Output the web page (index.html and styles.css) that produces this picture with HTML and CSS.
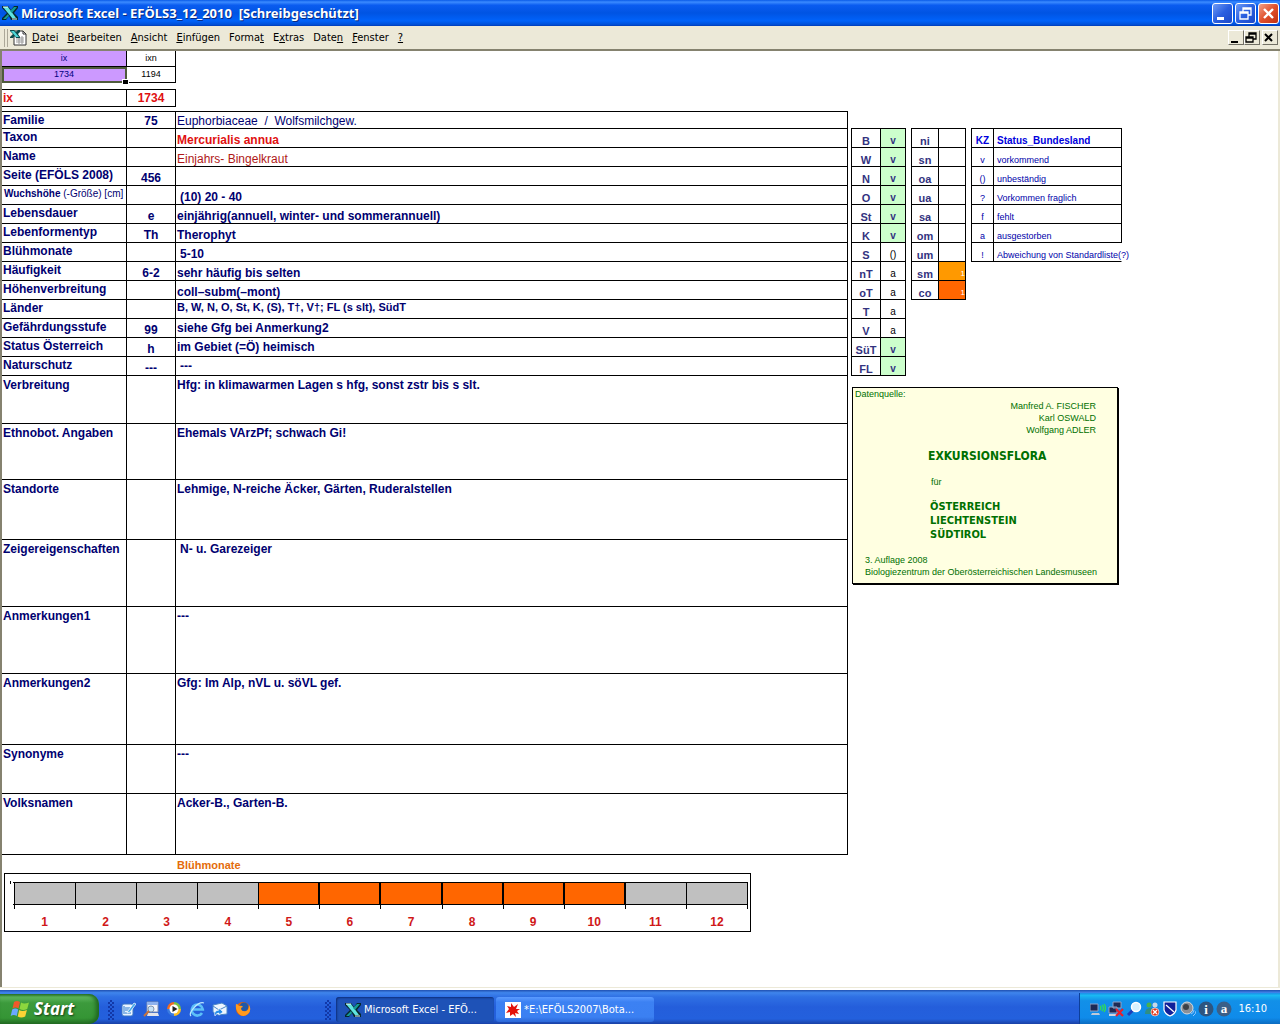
FILE: index.html
```html
<!DOCTYPE html>
<html lang="de">

<head>
    <meta charset="UTF-8">
    <meta name="viewport" content="width=device-width, initial-scale=1.0">
    <title>Microsoft Excel - EFÖLS3_12_2010</title>
    <link rel="stylesheet" href="styles.css">
</head>

<body>
    <svg width="0" height="0" class="defs">
        <symbol id="excel" viewBox="0 0 16 16">
            <path d="M0 1h6l3 4 3-4h4v2l-4 5 4 4v3H9l-2-4-3 4H0v-2l5-5-5-5z" fill="#06282c" />
            <path d="M1 2h5l8 11h-4z" fill="#5fe3e0" />
            <path d="M12 2h3l-5 6-2-2zM1 14l5-5 1 2-3 3z" fill="#159a96" />
            <path d="M1 2h5M10 14h5" stroke="#e6ffff" stroke-width="1" fill="none" />
        </symbol>
    </svg>

    <header class="titlebar">
        <svg class="icon"><use href="#excel" /></svg>
        <h1>Microsoft Excel - EFÖLS3_12_2010&nbsp; [Schreibgeschützt]</h1>
        <div class="win-buttons">
            <button aria-label="Minimieren"><svg viewBox="0 0 19 19"><path d="M4 13h7v3H4z" fill="#fff" /></svg></button>
            <button aria-label="Wiederherstellen"><svg viewBox="0 0 19 19"><path d="M7 8V4h8v7h-3M7 5h8M4 8h8v7H4zM4 9h8" fill="none" stroke="#fff" stroke-width="1.3" /></svg></button>
            <button class="red" aria-label="Schließen"><svg viewBox="0 0 19 19"><path d="M5 5l9 9M14 5l-9 9" stroke="#fff" stroke-width="2.4" /></svg></button>
        </div>
    </header>

    <nav class="menubar">
        <span class="grip"></span>
        <svg class="doc" viewBox="0 0 17 17">
            <path d="M4 2h9l3 3v11H4z" fill="#fff" stroke="#333" />
            <path d="M13 2v3h3" fill="none" stroke="#333" />
            <path d="M6 9h8M6 11h8M6 13h8M9 7v8M12 7v8" stroke="#9a9a9a" />
            <path d="M0 1h4l2 2 2-2h2v2L8 5l2 3v1H6L5 7 3 9H0V8l3-3-3-3z" fill="#0b4a4a" />
            <path d="M1 2h3l5 6H6z" fill="#4fd8d8" />
        </svg>
        <button><u>D</u>atei</button>
        <button><u>B</u>earbeiten</button>
        <button><u>A</u>nsicht</button>
        <button><u>E</u>infügen</button>
        <button>Forma<u>t</u></button>
        <button>E<u>x</u>tras</button>
        <button>Date<u>n</u></button>
        <button><u>F</u>enster</button>
        <button><u>?</u></button>
        <div class="doc-buttons">
            <button aria-label="Mappe minimieren"><svg viewBox="0 0 12 12"><path d="M2 9h7v2H2z" /></svg></button>
            <button aria-label="Mappe wiederherstellen"><svg viewBox="0 0 12 12"><path d="M4 5V1h7v6H8M4 2h7M1 5h7v5H1zM1 6h7" fill="none" stroke="#000" stroke-width="1.3" /></svg></button>
            <button class="last" aria-label="Mappe schließen"><svg viewBox="0 0 12 12"><path d="M2 2l7 7M9 2L2 9" stroke="#000" stroke-width="2" /></svg></button>
        </div>
    </nav>

    <main class="sheet">
        <section class="record">
            <table class="grid index">
                <tr><td class="lila">ix</td><td>ixn</td></tr>
                <tr><td class="lila selected">1734</td><td>1194</td></tr>
            </table>
            <table class="grid key">
                <tr><th>ix</th><td>1734</td></tr>
            </table>
            <table class="grid data">
                <colgroup><col class="c1"><col class="c2"><col></colgroup>
                <tr class="first"><th>Familie</th><td class="num">75</td><td class="plain">Euphorbiaceae&nbsp; /&nbsp; Wolfsmilchgew.</td></tr>
                <tr><th>Taxon</th><td></td><td class="red">Mercurialis annua</td></tr>
                <tr><th>Name</th><td></td><td class="plain darkred">Einjahrs- Bingelkraut</td></tr>
                <tr><th>Seite (EFÖLS 2008)</th><td class="num">456</td><td></td></tr>
                <tr><th class="small"><b>Wuchshöhe</b> (-Größe) [cm]</th><td></td><td class="indent">(10) 20 - 40</td></tr>
                <tr><th>Lebensdauer</th><td class="num">e</td><td>einjährig(annuell, winter- und sommerannuell)</td></tr>
                <tr><th>Lebenformentyp</th><td class="num">Th</td><td>Therophyt</td></tr>
                <tr><th>Blühmonate</th><td></td><td class="indent">5-10</td></tr>
                <tr><th>Häufigkeit</th><td class="num">6-2</td><td>sehr häufig bis selten</td></tr>
                <tr><th>Höhenverbreitung</th><td></td><td>coll–subm(–mont)</td></tr>
                <tr><th>Länder</th><td></td><td class="lands">B, W, N, O, St, K, (S), T†, V†; FL (s slt), SüdT</td></tr>
                <tr class="mid"><th>Gefährdungsstufe</th><td class="num">99</td><td>siehe Gfg bei Anmerkung2</td></tr>
                <tr class="mid"><th>Status Österreich</th><td class="num">h</td><td>im Gebiet (=Ö) heimisch</td></tr>
                <tr class="mid"><th>Naturschutz</th><td class="num">---</td><td class="indent">---</td></tr>
                <tr class="tall h48"><th>Verbreitung</th><td></td><td>Hfg: in klimawarmen Lagen s hfg, sonst zstr bis s slt.</td></tr>
                <tr class="tall h56"><th>Ethnobot. Angaben</th><td></td><td>Ehemals VArzPf; schwach Gi!</td></tr>
                <tr class="tall h60"><th>Standorte</th><td></td><td>Lehmige, N-reiche Äcker, Gärten, Ruderalstellen</td></tr>
                <tr class="tall h67"><th>Zeigereigenschaften</th><td></td><td class="indent">N- u. Garezeiger</td></tr>
                <tr class="tall h67"><th>Anmerkungen1</th><td></td><td>---</td></tr>
                <tr class="tall h71"><th>Anmerkungen2</th><td></td><td>Gfg: Im Alp, nVL u. söVL gef.</td></tr>
                <tr class="tall h49"><th>Synonyme</th><td></td><td>---</td></tr>
                <tr class="tall h61"><th>Volksnamen</th><td></td><td>Acker-B., Garten-B.</td></tr>
            </table>

            <h2 class="chart-title">Blühmonate</h2>
            <div class="chart">
                <div class="month"><i></i><span>1</span></div>
                <div class="month"><i></i><span>2</span></div>
                <div class="month"><i></i><span>3</span></div>
                <div class="month"><i></i><span>4</span></div>
                <div class="month on"><i></i><span>5</span></div>
                <div class="month on"><i></i><span>6</span></div>
                <div class="month on"><i></i><span>7</span></div>
                <div class="month on"><i></i><span>8</span></div>
                <div class="month on"><i></i><span>9</span></div>
                <div class="month on"><i></i><span>10</span></div>
                <div class="month"><i></i><span>11</span></div>
                <div class="month"><i></i><span>12</span></div>
            </div>
        </section>

        <aside class="side">
            <div class="tables">
                <table class="grid status">
                    <tr><th>B</th><td class="v">v</td></tr>
                    <tr><th>W</th><td class="v">v</td></tr>
                    <tr><th>N</th><td class="v">v</td></tr>
                    <tr><th>O</th><td class="v">v</td></tr>
                    <tr><th>St</th><td class="v">v</td></tr>
                    <tr><th>K</th><td class="v">v</td></tr>
                    <tr><th>S</th><td>()</td></tr>
                    <tr><th>nT</th><td>a</td></tr>
                    <tr><th>oT</th><td>a</td></tr>
                    <tr><th>T</th><td>a</td></tr>
                    <tr><th>V</th><td>a</td></tr>
                    <tr><th>SüT</th><td class="v">v</td></tr>
                    <tr><th>FL</th><td class="v">v</td></tr>
                </table>
                <table class="grid status zones">
                    <tr><th>ni</th><td></td></tr>
                    <tr><th>sn</th><td></td></tr>
                    <tr><th>oa</th><td></td></tr>
                    <tr><th>ua</th><td></td></tr>
                    <tr><th>sa</th><td></td></tr>
                    <tr><th>om</th><td></td></tr>
                    <tr><th>um</th><td></td></tr>
                    <tr><th>sm</th><td class="sm">1</td></tr>
                    <tr><th>co</th><td class="co">1</td></tr>
                </table>
                <table class="grid legend">
                    <tr><th>KZ</th><th>Status_Bundesland</th></tr>
                    <tr><td>v</td><td>vorkommend</td></tr>
                    <tr><td>()</td><td>unbeständig</td></tr>
                    <tr><td>?</td><td>Vorkommen fraglich</td></tr>
                    <tr><td>f</td><td>fehlt</td></tr>
                    <tr><td>a</td><td>ausgestorben</td></tr>
                    <tr><td>!</td><td class="open">Abweichung von Standardliste(?)</td></tr>
                </table>
            </div>

            <div class="note">
                <p>Datenquelle:</p>
                <p class="authors">Manfred A. FISCHER<br>Karl OSWALD<br>Wolfgang ADLER</p>
                <h3>EXKURSIONSFLORA</h3>
                <p class="for">für</p>
                <h4>ÖSTERREICH<br>LIECHTENSTEIN<br>SÜDTIROL</h4>
                <p class="publisher">3. Auflage 2008<br>Biologiezentrum der Oberösterreichischen Landesmuseen</p>
            </div>
        </aside>
    </main>

    <footer class="taskbar">
        <button class="start">
            <svg viewBox="0 0 20 20">
                <path d="M4 3q3-2 6 0L8.500 9.500q-3-2-6 0z" fill="#f0592b" />
                <path d="M11 3.500q3 2 8 0L17.200 10q-4 2-7.700 0z" fill="#8cd63e" />
                <path d="M2.200 10.500q3-2 6 0L6.700 17q-3-2-6 0z" fill="#6ba8ff" />
                <path d="M9.200 11q3 2 7.700 0L15.200 17.500q-4 2-7.500 0z" fill="#fbd335" />
            </svg>
            Start
        </button>
        <span class="dots"></span>
        <div class="quick">
            <button aria-label="Desktop anzeigen"><svg viewBox="0 0 16 16">
                <rect x="2" y="3" width="11" height="12" rx="2" fill="#e9f4ff" stroke="#3b77c4" />
                <path d="M5 7h5M5 9h4M5 12h6M4 5v8" stroke="#2b7bd0" fill="none" />
                <path d="M8 10l6-8 2 1-6 8-3 1z" fill="#3fa7ea" stroke="#fff" stroke-width=".7" />
            </svg></button>
            <button aria-label="Suchen"><svg viewBox="0 0 16 16">
                <path d="M4 1h11v10H4z" fill="#f4f4fa" stroke="#7e8fb0" />
                <path d="M4 1h11v3H4z" fill="#8fb2ee" />
                <path d="M5 12h10l1 3H4z" fill="#e4e4ea" />
                <circle cx="8" cy="8" r="3" fill="#c7e3f8" stroke="#8594ad" />
                <path d="M6 10l-5 5" stroke="#c9743a" stroke-width="2" />
            </svg></button>
            <button aria-label="Media Player"><svg viewBox="0 0 16 16">
                <path d="M8 1a7 7 0 0 1 7 7H8z" fill="#7ac143" />
                <path d="M8 1a7 7 0 0 0-7 7h7z" fill="#ef6b23" />
                <path d="M1 8a7 7 0 0 0 7 7V8z" fill="#3a7be0" />
                <path d="M8 15a7 7 0 0 0 7-7H8z" fill="#fdbf24" />
                <circle cx="8" cy="8" r="4.500" fill="#fff" />
                <path d="M6.500 5l5 3-5 3z" fill="#222" />
            </svg></button>
            <button aria-label="Internet Explorer"><svg viewBox="0 0 16 16">
                <path d="M13 12a5.500 5.500 0 1 1 .8-3.500H4" fill="none" stroke="#5cc0f8" stroke-width="2.600" />
                <path d="M2 15C-1 12 9 0 15 2" fill="none" stroke="#bfe8ff" stroke-width="1.200" />
            </svg></button>
            <button aria-label="Outlook Express"><svg viewBox="0 0 16 16">
                <path d="M1 4l9-2 5 3v8l-9 1-5-3z" fill="#eef6ff" stroke="#4b86c8" />
                <path d="M1 5l6 4 8-4" fill="none" stroke="#4b86c8" />
                <path d="M3 15q-2-5 4-6V7l4 4-4 3v-2q-3 0-4 3z" fill="#268ce8" stroke="#fff" stroke-width=".6" />
            </svg></button>
            <button aria-label="Firefox"><svg viewBox="0 0 16 16">
                <circle cx="8" cy="8" r="7" fill="#e66000" />
                <circle cx="9" cy="6" r="4.500" fill="#1f58a8" />
                <path d="M1 3q2 0 3 2 3-1 4 1-2 0-2 2 1 3 5 2 3-1 3-6 3 5-1 9-5 4-9 0-4-4-3-10z" fill="#ff9a1f" />
            </svg></button>
        </div>
        <span class="dots"></span>
        <button class="task active"><svg class="icon"><use href="#excel" /></svg><span>Microsoft Excel - EFÖ...</span></button>
        <button class="task">
            <svg class="icon" viewBox="0 0 16 16">
                <path d="M0 0h16v16H0z" fill="#fff" />
                <path d="M6 1l3 4 4-3-2 5h4l-3 2 2 3-4-1 1 4-3-3-3 2v-4l-4 1 3-4-2-3 4 1z" fill="#e3120b" />
            </svg>
            <span>*E:\EFÖLS2007\Bota...</span>
        </button>
        <div class="tray">
            <svg viewBox="0 0 16 16"><path d="M0 3h8v7H0z" fill="#1d2a55" stroke="#8fa3c8" /><path d="M2 12h7l1 2H1z" fill="#bfc9d8" /><path d="M10 5q2 2 0 4M12 4q3 3 0 6M14 3q3 4 0 8" fill="none" stroke="#35e04a" stroke-width="1.200" /></svg>
            <svg viewBox="0 0 16 16"><path d="M5 1h8v6H5zM1 6h8v6H1z" fill="#1d2a55" stroke="#8fa3c8" /><path d="M1 14h8" stroke="#cdd5e0" stroke-width="2" /><path d="M8 8l7 7M15 8l-7 7" stroke="#e8202a" stroke-width="2.200" /></svg>
            <svg viewBox="0 0 16 16"><path d="M7 9l-5 5" stroke="#1c3fb8" stroke-width="3" /><circle cx="10" cy="6" r="4.500" fill="#d6f1ff" stroke="#fff" stroke-width="1.500" /></svg>
            <svg viewBox="0 0 16 16"><circle cx="5" cy="4" r="2.500" fill="#49b04e" /><circle cx="11" cy="4" r="2.500" fill="#c8d8e8" /><path d="M1 13q0-6 5-6t5 6z" fill="#2f8e83" /><path d="M8 8q4-2 6 3H8z" fill="#e9eef5" /><circle cx="11" cy="11" r="4" fill="#e2381c" stroke="#fff" stroke-width=".6" /><path d="M9 9l4 4M13 9l-4 4" stroke="#fff" stroke-width="1.300" /></svg>
            <svg viewBox="0 0 16 16"><path d="M2 1h12v8q-1 4-6 6-5-2-6-6z" fill="#10209a" stroke="#fff" stroke-width="1.200" /><path d="M4 4l8 7" stroke="#fff" stroke-width="1.200" /></svg>
            <svg viewBox="0 0 16 16"><circle cx="7" cy="7" r="6" fill="#8b9097" stroke="#d7dade" /><circle cx="6" cy="6" r="3" fill="#3c4148" /><path d="M11 13q3-1 3-4M13 15q3-2 3-5" fill="none" stroke="#8dc4ff" /></svg>
            <svg viewBox="0 0 16 16"><circle cx="8" cy="8" r="7.500" fill="#2d5580" /><text x="8" y="13" class="glyph">i</text></svg>
            <svg viewBox="0 0 16 16"><circle cx="8" cy="8" r="7.500" fill="#3a5f88" /><text x="8" y="12" class="glyph">a</text></svg>
            <time>16:10</time>
        </div>
    </footer>
</body>

</html>
```
FILE: styles.css
```css
* {
    box-sizing: border-box;
}

html,
body {
    margin: 0;
    padding: 0;
    height: 100%;
}

body {
    display: flex;
    flex-direction: column;
    overflow: hidden;
    background: #fff;
    font-family: "Liberation Sans", Arial, sans-serif;
    font-size: 12px;
    color: #000070;
}

h1, h2, h3, h4, p {
    margin: 0;
}

button {
    margin: 0;
    padding: 0;
    border: 0;
    background: none;
    font: inherit;
    color: inherit;
}

.defs {
    position: absolute;
}

.icon {
    width: 16px;
    height: 16px;
    flex: none;
}

/* Titelleiste */
.titlebar {
    display: flex;
    align-items: center;
    gap: 3px;
    height: 26px;
    flex: none;
    padding: 0 1px 0 2px;
    background: linear-gradient(#0a5be8, #3b8bff 8%, #0a5cf0 20%, #0054e3 50%, #0062fa 80%, #0050d8 94%, #003bb8);
    color: #fff;
}

.titlebar h1 {
    flex: 1;
    font: bold 13px/24px "Noto Sans", "Open Sans", sans-serif;
    text-shadow: 1px 1px #0a2a80;
}

.win-buttons {
    display: flex;
    gap: 2px;
}

.win-buttons button {
    width: 21px;
    height: 21px;
    border: 1px solid #fff;
    border-radius: 3px;
    background: linear-gradient(135deg, #6f9bf5, #2a5fe0 50%, #1b48c8);
}

.win-buttons .red {
    background: linear-gradient(135deg, #f0a088, #e0502c 50%, #c03010);
}

.win-buttons svg {
    display: block;
    width: 19px;
    height: 19px;
}

/* Menü */
.menubar {
    display: flex;
    align-items: center;
    gap: 9px;
    height: 25px;
    flex: none;
    padding: 0 2px 0 4px;
    border-bottom: 2px solid #85826f;
    background: #ece9d8;
    color: #000;
    font: 11px/14px "DejaVu Sans Condensed", Tahoma, sans-serif;
}

.grip {
    width: 4px;
    height: 18px;
    margin-right: -7px;
    border: 1px solid #aca899;
    border-width: 0 1px;
}

.doc {
    width: 17px;
    height: 17px;
    margin-right: -4px;
}

.doc-buttons {
    display: flex;
    margin-left: auto;
}

.doc-buttons button {
    width: 16px;
    height: 15px;
    border: 1px solid;
    border-color: #fff #716f64 #716f64 #fff;
}

.doc-buttons .last {
    margin-left: 2px;
}

.doc-buttons svg {
    display: block;
    width: 12px;
    height: 12px;
}

/* Tabellenblatt */
.sheet {
    display: flex;
    align-items: flex-start;
    gap: 3px;
    flex: 1;
    min-height: 0;
    margin-bottom: 2px;
    overflow: hidden;
    border: solid #ece9d8;
    border-width: 0 2px 1px 0;
    box-shadow: inset 2px 0 #85826f;
    padding-left: 2px;
}

.record {
    flex: 0 1 846px;
}

.grid {
    border-collapse: separate;
    border-spacing: 0;
    table-layout: fixed;
}

.grid td,
.grid th {
    padding: 0;
    border: 0 solid #000;
    border-width: 0 1px 1px 0;
    white-space: nowrap;
}

.index {
    width: 174px;
}

.index td {
    height: 16px;
    width: 49px;
    line-height: 15px;
    font-size: 9px;
    text-align: center;
    color: #000;
}

.index .lila {
    width: 125px;
    background: #cc99ff;
    color: #000080;
}

.index .selected {
    position: relative;
    outline: 2px solid #4f5b3c;
    outline-offset: -2px;
}

/* Ausfüllkästchen */
.index .selected::after {
    content: "";
    position: absolute;
    right: -3px;
    bottom: -3px;
    width: 5px;
    height: 4px;
    border: 1px solid #fff;
    background: #000;
}

.key {
    width: 174px;
    margin: 6px 0 4px;
    border-top: 1px solid #000;
    color: #e01010;
}

.key th,
.key td {
    height: 17px;
    line-height: 16px;
    font-weight: bold;
}

.key th {
    width: 125px;
    padding-left: 1px;
    text-align: left;
}

.key td {
    width: 49px;
    font-size: 12px;
    text-align: center;
}

.data {
    width: 100%;
    border-top: 1px solid #000;
}

.c1 {
    width: 125px;
}

.c2 {
    width: 49px;
}

.data th,
.data td {
    height: 19px;
    padding-left: 1px;
    line-height: 16px;
    font-weight: bold;
    text-align: left;
    vertical-align: top;
}

.data td {
    line-height: 14px;
    vertical-align: bottom;
}

.data .first th,
.data .first td {
    height: 17px;
}

.data .num {
    padding-left: 0;
    text-align: center;
}

.data .indent {
    padding-left: 4px;
}

.data .plain {
    font-weight: normal;
}

.data .darkred {
    color: #b01818;
}

.data .red {
    color: #e01010;
}

.data .small {
    padding-left: 2px;
    font-size: 10px;
    font-weight: normal;
}

.data .lands {
    font-size: 11px;
    vertical-align: top;
}

.data .mid td:last-child {
    line-height: 18px;
}

.data .tall th,
.data .tall td {
    line-height: 18px;
    vertical-align: top;
}

.data .h48 td { height: 48px; }
.data .h49 td { height: 49px; }
.data .h56 td { height: 56px; }
.data .h60 td { height: 60px; }
.data .h61 td { height: 61px; }
.data .h67 td { height: 67px; }
.data .h71 td { height: 71px; }

/* Diagramm Blühmonate */
.chart-title {
    padding: 3px 0 0 175px;
    font-size: 11px;
    line-height: 15px;
    color: #e46c0a;
}

/* die drei kleinen Striche links sind die Achsenmarken */
.chart {
    display: flex;
    max-width: 747px;
    margin-left: 2px;
    padding: 8px 3px 0 9px;
    border: 1px solid #000;
    background:
        linear-gradient(#000, #000) 5px 7px / 1px 3px no-repeat,
        linear-gradient(#000, #000) 8px 8px / 2px 1px no-repeat,
        linear-gradient(#000, #000) 8px 30px / 2px 1px no-repeat;
}

.month {
    flex: 1;
    text-align: center;
    font-weight: bold;
    color: #d01818;
}

.month i {
    display: block;
    height: 23px;
    border: solid #000;
    border-width: 1px 0 1px 1px;
    background: #c0c0c0;
}

.month.on i {
    background: #ff6600;
}

.month.on + .month i {
    margin-left: -1px;
    border-left-width: 2px;
}

.month:last-child i,
.month:last-child span {
    margin-right: -1px;
}

.month:last-child i {
    border-right-width: 1px;
}

.month span {
    display: block;
    padding: 10px 0 1px;
    line-height: 15px;
    background: linear-gradient(#000, #000) 0 0 / 1px 4px no-repeat;
}

.month:last-child span {
    background: linear-gradient(#000, #000) 0 0 / 1px 4px no-repeat, linear-gradient(#000, #000) 100% 0 / 1px 4px no-repeat;
}

/* rechte Seite */
.side {
    padding-top: 77px;
}

.tables {
    display: flex;
    align-items: flex-start;
    gap: 5px;
}

.tables .grid {
    border: solid #000;
    border-width: 1px 0 0 1px;
}

.tables td,
.tables th {
    height: 19px;
    line-height: 12px;
    text-align: center;
    vertical-align: bottom;
}

.status {
    width: 55px;
}

.status th {
    width: 29px;
    font-size: 11px;
    color: #333380;
}

.status td {
    font-size: 10px;
    color: #000;
}

.status .v {
    background: #ccffcc;
    font-weight: bold;
    color: #333380;
}

.zones th {
    width: 27px;
}

.status .sm,
.status .co {
    background: #ff9900;
    font-size: 8px;
    text-align: right;
    color: #fff;
}

.status .co {
    background: #ff6600;
}

.legend {
    width: 151px;
    color: #0000aa;
}

.legend th {
    font-size: 10px;
    line-height: 13px;
    color: #0000dd;
}

.legend td {
    font-size: 9px;
}

.legend th:first-child {
    width: 22px;
}

.legend th:last-child,
.legend td:last-child {
    padding-left: 3px;
    text-align: left;
}

.legend .open {
    border-right-color: transparent;
}

.note {
    width: 266px;
    margin: 11px 0 0 1px;
    padding: 0 2px 5px;
    border: 1px solid #000;
    box-shadow: 1px 1px #000;
    background: #ffffe1;
    color: #007000;
    font-size: 9px;
    line-height: 12px;
}

.note .authors {
    padding-right: 19px;
    text-align: right;
}

.note h3 {
    padding: 12px 0 12px 73px;
    font: bold 12px/16px "DejaVu Sans Condensed", Tahoma, sans-serif;
}

.note .for {
    padding-left: 76px;
}

.note h4 {
    padding: 12px 0 12px 75px;
    font: bold 11px/14px "DejaVu Sans Condensed", Tahoma, sans-serif;
}

.note .publisher {
    padding-left: 10px;
}

/* Taskleiste */
.taskbar {
    display: flex;
    align-items: stretch;
    height: 34px;
    flex: none;
    background: linear-gradient(#1f4fb0, #3f85ec 8%, #2f70e4 20%, #245edb 50%, #2360dd 85%, #1941a5);
    color: #fff;
    font: 11px/14px "DejaVu Sans Condensed", Tahoma, sans-serif;
}

.start {
    display: flex;
    align-items: center;
    gap: 4px;
    width: 99px;
    margin-top: 4px;
    padding-left: 10px;
    border-radius: 0 10px 10px 0;
    background: linear-gradient(#2f7a2f, #5db65d 10%, #3c9a3c 30%, #359535 80%, #256f25);
    box-shadow: inset -3px 0 4px #1f651f;
    font: italic bold 17px/20px "Noto Sans", "Open Sans", sans-serif;
    text-shadow: 1px 1px 2px #143f14;
}

.start svg {
    width: 20px;
    height: 20px;
}

.dots {
    width: 6px;
    margin: 10px 0 4px 9px;
    background:
        linear-gradient(#1440b4, #1440b4) 0 0 / 6px 4px,
        #245edb;
    background:
        conic-gradient(#1238a8 25%, transparent 0 50%, #1238a8 0 75%, transparent 0) 0 0 / 4px 4px;
}

.quick {
    display: flex;
    align-items: center;
    gap: 7px;
    width: 202px;
    padding: 4px 0 0 6px;
}

.quick svg {
    display: block;
    width: 16px;
    height: 16px;
}

.task {
    display: flex;
    align-items: center;
    gap: 3px;
    width: 158px;
    margin: 7px 2px 2px 0;
    padding-left: 9px;
    border-radius: 3px;
    background: linear-gradient(#5b9bff, #3c81f3 20%, #3b80f2 80%, #2b68d8);
}

.task.active {
    margin-left: 5px;
    background: #1e52b7;
    box-shadow: inset 1px 1px 2px #0e2f7a;
}

.tray {
    display: flex;
    align-items: center;
    gap: 2px;
    margin-left: auto;
    margin-top: 3px;
    padding: 0 13px 0 10px;
    border-left: 1px solid #0c3f9a;
    background: linear-gradient(#1c8fe8, #19b9f3 8%, #1290e8 25%, #0f8bea 80%, #0c6cc0);
}

.tray svg {
    width: 16px;
    height: 16px;
}

.tray time {
    margin-left: 4px;
}

.glyph {
    font: bold 13px "Liberation Serif", serif;
    text-anchor: middle;
    fill: #fff;
}
```
